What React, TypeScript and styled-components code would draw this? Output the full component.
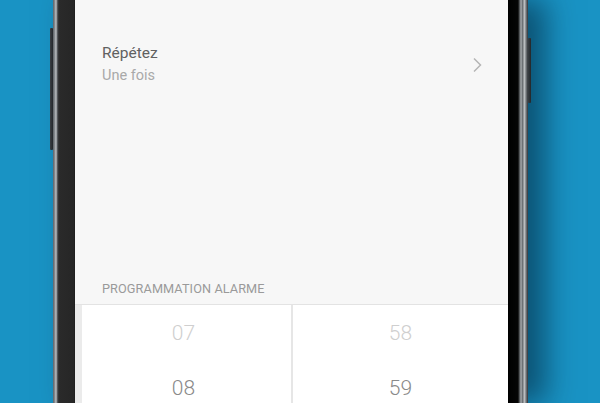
import React from "react";
import styled, { createGlobalStyle } from "styled-components";

const Global = createGlobalStyle`
  html, body { margin: 0; padding: 0; }
  body {
    width: 600px;
    height: 403px;
    overflow: hidden;
    background: #1993c4;
    font-family: Roboto, "Noto Sans", sans-serif;
  }
`;

const Stage = styled.div`
  display: flex;
  width: 600px;
  height: 403px;
  padding-left: 53px;
  box-sizing: border-box;
`;

const Phone = styled.div`
  position: relative;
  display: flex;
  width: 475px;
  height: 403px;
  box-shadow: 18px 0 28px rgba(0, 30, 50, 0.55);
`;

const SideButton = styled.div<{ $side: "left" | "right"; $top: number; $h: number }>`
  position: absolute;
  top: ${(p) => p.$top}px;
  height: ${(p) => p.$h}px;
  width: 3px;
  ${(p) => (p.$side === "left" ? "left: -3px;" : "right: -3px;")}
  background: linear-gradient(90deg, #3a3f44, #23272b);
  border-radius: 1px;
`;

const LeftBezel = styled.div`
  width: 22px;
  flex: none;
  background: linear-gradient(
    90deg,
    #5c6166 0px,
    #8d9296 2px,
    #c4c8cb 3px,
    #6d7175 4px,
    #3b3d40 5px,
    #2a2a2a 6px,
    #262626 21px,
    #1a1a1a 22px
  );
`;

const RightBezel = styled.div`
  width: 20px;
  flex: none;
  background: linear-gradient(
    90deg,
    #000 0px,
    #050505 10px,
    #3a3c3e 11px,
    #a6aaad 13px,
    #5a5e62 15px,
    #cfd2d4 16px,
    #7b7f83 18px,
    #2c3034 20px
  );
`;

const Screen = styled.div`
  flex: 1;
  display: flex;
  flex-direction: column;
  background: #f7f7f7;
  overflow: hidden;
`;

const Row = styled.div`
  flex: none;
  display: flex;
  align-items: center;
  justify-content: space-between;
  padding: 41px 26px 0 27px;
  height: 47px;
`;

const RowText = styled.div`
  display: flex;
  flex-direction: column;
  gap: 5px;
`;

const Title = styled.div`
  font-size: 15.5px;
  color: #616161;
  line-height: 18px;
`;

const Subtitle = styled.div`
  font-size: 14.5px;
  color: #a9a9a9;
  line-height: 18px;
`;

const Spacer = styled.div`
  flex: none;
  height: 194px;
`;

const SectionHeader = styled.div`
  flex: none;
  font-size: 12.7px;
  color: #9a9a9a;
  letter-spacing: 0.1px;
  padding: 0 0 8px 27px;
  line-height: 14px;
  border-bottom: 1px solid #e3e3e3;
`;

const PickerArea = styled.div`
  flex: none;
  height: 120px;
  display: flex;
  padding-left: 7px;
  background: #ebebeb;
`;

const Column = styled.div<{ $divider?: boolean }>`
  display: flex;
  flex-direction: column;
  align-items: center;
  background: #fff;
  box-sizing: border-box;
  ${(p) =>
    p.$divider
      ? "flex: 1; border-left: 2px solid #e6e6e6;"
      : "flex: 0 0 209px; padding-right: 6px;"}
`;

const Cell = styled.div<{ $faded?: boolean }>`
  height: 55px;
  display: flex;
  align-items: center;
  justify-content: center;
  font-size: 21px;
  font-weight: 300;
  color: ${(p) => (p.$faded ? "#cfcfcf" : "#8a8a8a")};
`;

const Chevron = () => (
  <svg width="10" height="16" viewBox="0 0 10 16">
    <path d="M2 1.5 L8.5 8 L2 14.5" fill="none" stroke="#b5b5b5" strokeWidth="1.5" />
  </svg>
);

export default function App() {
  return (
    <>
      <Global />
      <Stage>
        <Phone>
          <SideButton $side="left" $top={28} $h={122} />
          <SideButton $side="right" $top={38} $h={65} />
          <LeftBezel />
          <Screen>
            <Row>
              <RowText>
                <Title>Répétez</Title>
                <Subtitle>Une fois</Subtitle>
              </RowText>
              <Chevron />
            </Row>
            <Spacer />
            <SectionHeader>PROGRAMMATION ALARME</SectionHeader>
            <PickerArea>
              <Column>
                <Cell $faded>07</Cell>
                <Cell>08</Cell>
              </Column>
              <Column $divider>
                <Cell $faded>58</Cell>
                <Cell>59</Cell>
              </Column>
            </PickerArea>
          </Screen>
          <RightBezel />
        </Phone>
      </Stage>
    </>
  );
}
